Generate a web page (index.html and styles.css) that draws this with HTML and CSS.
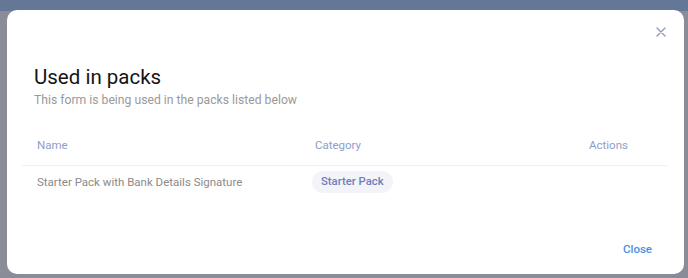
FILE: index.html
```html
<!DOCTYPE html>
<html lang="en">
<head>
  <meta charset="UTF-8" />
  <meta name="viewport" content="width=device-width, initial-scale=1.0"/>
  <title>Used in packs</title>
  <link rel="stylesheet" href="styles.css">
</head>
<body>

<div class="topbar"></div>

<div class="dialog">
  <div class="dialog-top">
    <button class="close-x" aria-label="Close">
      <svg width="10" height="10" viewBox="0 0 10 10">
        <path d="M1 1 L9 9 M9 1 L1 9" stroke="#8e9cb8" stroke-width="1.4" stroke-linecap="round" fill="none"/>
      </svg>
    </button>
  </div>

  <div class="dialog-head">
    <h2>Used in packs</h2>
    <p>This form is being used in the packs listed below</p>
  </div>

  <div class="packs-table">
    <div class="row head-row">
      <div class="cell">Name</div>
      <div class="cell">Category</div>
      <div class="cell">Actions</div>
    </div>
    <div class="row body-row">
      <div class="cell">Starter Pack with Bank Details Signature</div>
      <div class="cell"><span class="chip">Starter Pack</span></div>
      <div class="cell"></div>
    </div>
  </div>

  <div class="dialog-actions">
    <button class="text-btn">Close</button>
  </div>
</div>

</body>
</html>
```

FILE: styles.css
```css
body {
  margin: 0;
  font-family: Roboto, "Liberation Sans", sans-serif;
  background: #8a8d97;
  height: 278px;
  overflow: hidden;
}
.topbar {
  height: 11px;
  background: #647797;
}
.dialog {
  position: absolute;
  left: 7px;
  top: 10px;
  width: 677px;
  height: 264px;
  box-sizing: border-box;
  background: white;
  border-radius: 10px;
  display: flex;
  flex-direction: column;
}
.dialog-top {
  display: flex;
  justify-content: flex-end;
  padding: 17px 18px 0;
  height: 10px;
}
.close-x {
  border: none;
  background: none;
  padding: 0;
  width: 10px;
  height: 10px;
  cursor: pointer;
  display: block;
}
.close-x svg {
  display: block;
}
.dialog-head {
  padding: 28px 27px 0;
}
.dialog-head h2 {
  margin: 0;
  font-size: 20.5px;
  font-weight: 400;
  color: #141414;
  line-height: 24px;
}
.dialog-head p {
  margin: 4px 0 0;
  font-size: 12.2px;
  color: #9a9a9a;
  line-height: 15px;
}
.packs-table {
  margin: 17px 17px 0 15px;
}
.row {
  display: grid;
  grid-template-columns: 278px 274px 1fr;
  align-items: center;
}
.cell {
  padding: 0 15px;
  font-size: 11.5px;
  line-height: 16px;
}
.head-row {
  padding: 12px 0;
  border-bottom: 1px solid #f0f0f2;
  color: #909dca;
}
.body-row {
  padding: 5px 0;
  color: #8a8a8a;
}
.chip {
  display: inline-block;
  margin-left: -3px;
  padding: 0 9px;
  line-height: 22px;
  border-radius: 11px;
  background: #f3f4f9;
  color: #6f7eb8;
  font-weight: 500;
  font-size: 11.3px;
}
.dialog-actions {
  margin-top: auto;
  display: flex;
  justify-content: flex-end;
  padding: 0 16px 9px;
}
.text-btn {
  border: none;
  background: none;
  font-family: inherit;
  font-size: 11.5px;
  font-weight: 500;
  line-height: 16px;
  color: #4b8fe2;
  padding: 8px 16px;
  cursor: pointer;
}
```
